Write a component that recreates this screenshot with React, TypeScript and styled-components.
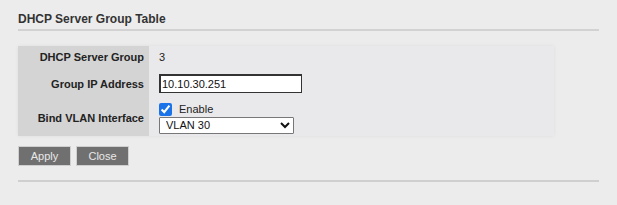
import React from 'react';
import styled, { createGlobalStyle } from 'styled-components';

const GlobalStyle = createGlobalStyle`
  html, body {
    margin: 0;
    padding: 0;
    background: #ececec;
  }
  body {
    font-family: "Liberation Sans", Arial, sans-serif;
    font-size: 11px;
    color: #222;
  }
`;

const App: React.FC = () => {
  return (
    <>
      <GlobalStyle />
      <Page>
        <Title>DHCP Server Group Table</Title>
        <Table>
          <tbody>
            <Row>
              <Label>DHCP Server Group</Label>
              <Value>3</Value>
            </Row>
            <Row $height={31}>
              <Label>Group IP Address</Label>
              <Value>
                <TextInput defaultValue="10.10.30.251" />
              </Value>
            </Row>
            <Row $height={37}>
              <Label>Bind VLAN Interface</Label>
              <Value>
                <CheckLine>
                  <Check type="checkbox" defaultChecked />
                  <span>Enable</span>
                </CheckLine>
                <Select defaultValue="30">
                  <option value="30">VLAN 30</option>
                </Select>
              </Value>
            </Row>
          </tbody>
        </Table>
        <Buttons>
          <Button>Apply</Button>
          <Button>Close</Button>
        </Buttons>
        <Divider />
      </Page>
    </>
  );
};

const Page = styled.div`
  width: 581px;
  padding: 12px 18px 24px;
`;

const Title = styled.h2`
  margin: 0;
  padding: 0 0 3px;
  font-size: 12px;
  line-height: 14px;
  font-weight: bold;
  color: #333;
  border-bottom: 2px solid #d2d2d2;
`;

const Table = styled.table`
  margin-top: 15px;
  width: 536px;
  border-collapse: collapse;
  background: #e9e9eb;
  box-shadow: 0 0 4px rgba(0, 0, 0, 0.06);
`;

const Row = styled.tr<{ $height?: number }>`
  height: ${({ $height }) => $height ?? 22}px;
  & + & td {
    border-top: 1px solid #dfdfeb;
  }
`;

const Label = styled.td`
  box-sizing: border-box;
  width: 131px;
  padding: 0 5px 0 0;
  background: #d4d4d4;
  text-align: right;
  font-weight: bold;
  color: #222;
`;

const Value = styled.td`
  padding: 0 0 0 10px;
  vertical-align: middle;
`;

const TextInput = styled.input`
  box-sizing: border-box;
  width: 143px;
  height: 19px;
  padding: 0 1px;
  border: 1px solid #333;
  border-top-width: 2px;
  border-left-width: 2px;
  background: #fff;
  font-family: "Liberation Sans", Arial, sans-serif;
  font-size: 11px;
  color: #111;
  outline: none;
`;

const CheckLine = styled.label`
  display: flex;
  align-items: center;
  gap: 7px;
  height: 13px;
  margin-top: 1px;
  font-size: 11px;
`;

const Check = styled.input`
  margin: 0;
  width: 13px;
  height: 13px;
  accent-color: #1a73e8;
`;

const Select = styled.select`
  box-sizing: border-box;
  display: block;
  width: 135px;
  height: 17px;
  margin-top: 1px;
  padding: 0 2px;
  border: 1px solid #777;
  border-radius: 1px;
  background: #fff;
  font-family: "Liberation Sans", Arial, sans-serif;
  font-size: 11px;
  color: #111;
`;

const Buttons = styled.div`
  display: flex;
  gap: 5px;
  margin-top: 10px;
`;

const Button = styled.button`
  width: 53px;
  height: 20px;
  padding: 0;
  border: 1px solid #cfcfcf;
  background: #707070;
  color: #e8e8e8;
  font-family: "Liberation Sans", Arial, sans-serif;
  font-size: 11px;
  cursor: pointer;
`;

const Divider = styled.hr`
  margin: 14px 0 0;
  border: 0;
  border-top: 2px solid #cfcfcf;
`;

export default App;
